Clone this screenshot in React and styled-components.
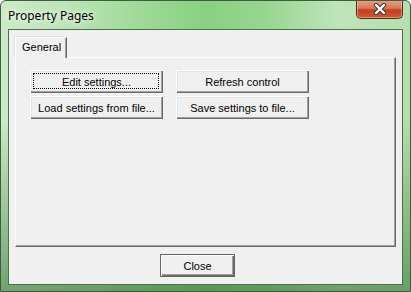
import styled, { createGlobalStyle } from 'styled-components';

const Global = createGlobalStyle`
  html, body {
    margin: 0;
    padding: 0;
    background: #ffffff;
  }
`;

const Window = styled.div`
  box-sizing: border-box;
  width: 411px;
  height: 292px;
  display: flex;
  flex-direction: column;
  padding: 0 7px 6px 7px;
  border: 1px solid #3e5c3e;
  border-radius: 6px 6px 0 0;
  background:
    linear-gradient(180deg, rgba(70,130,70,0) 0%, rgba(70,130,70,0) 40%, rgba(55,115,55,0.6) 100%),
    linear-gradient(90deg, #cdeac8 0%, #bde4b7 15%, #9cd996 35%, #88d180 50%, #97d690 65%, #bfe4ba 82%, #b4dfae 100%);
  overflow: hidden;
`;

const TitleBar = styled.div`
  height: 28px;
  flex: none;
  display: flex;
  justify-content: space-between;
  align-items: flex-start;
`;

const Title = styled.span`
  margin-top: 6px;
  font-family: "Noto Sans", "Open Sans", sans-serif;
  font-size: 12px;
  color: #000;
  text-shadow: 0 0 8px rgba(255,255,255,0.9), 0 0 4px rgba(255,255,255,0.9);
`;

const CloseButton = styled.div`
  width: 45px;
  height: 18px;
  margin-top: -1px;
  display: flex;
  align-items: center;
  justify-content: center;
  border: 1px solid #5a2a20;
  border-top: none;
  border-radius: 0 0 5px 5px;
  background: linear-gradient(180deg, #e8a08a 0%, #d9785c 45%, #c2401e 55%, #cf5a34 100%);
  box-shadow: inset 0 0 0 1px rgba(255,255,255,0.35);
`;

const Client = styled.div`
  flex: 1;
  display: flex;
  flex-direction: column;
  border: 1px solid #4f6e4f;
  background: #f0f0f0;
  padding: 7px 6px 0 6px;
  font-family: "Liberation Sans", Arial, sans-serif;
  font-size: 11px;
  color: #000;
`;

const TabStrip = styled.div`
  display: flex;
  height: 20px;
`;

const Tab = styled.div`
  box-sizing: border-box;
  width: 52px;
  height: 21px;
  padding: 3px 0 0 6px;
  background: #f0f0f0;
  border-top: 1px solid #ffffff;
  border-left: 1px solid #ffffff;
  border-right: 1px solid #696969;
  box-shadow: inset -1px 0 0 #a0a0a0, -1px -1px 0 #e3e3e3;
  position: relative;
  z-index: 1;
`;

const Panel = styled.div`
  box-sizing: border-box;
  height: 190px;
  border-top: 1px solid #ffffff;
  border-left: 1px solid #ffffff;
  border-right: 1px solid #696969;
  border-bottom: 1px solid #696969;
  box-shadow: inset -1px -1px 0 #a0a0a0;
  padding: 12px 0 0 14px;
`;

const ButtonGrid = styled.div`
  display: grid;
  grid-template-columns: 133px 133px;
  column-gap: 13px;
  row-gap: 3px;
`;

const Button = styled.button`
  box-sizing: border-box;
  width: ${p => p.$w || 133}px;
  height: 23px;
  padding: 0;
  font-family: "Liberation Sans", Arial, sans-serif;
  font-size: 11px;
  color: #000;
  background: #f0f0f0;
  border: none;
  box-shadow: ${p => p.$default
    ? 'inset 0 0 0 1px #646464, inset 1px 1px 0 1px #ffffff, inset -1px -1px 0 1px #696969, inset -2px -2px 0 1px #a0a0a0'
    : 'inset 1px 1px 0 #ffffff, inset -1px -1px 0 #696969, inset -2px -2px 0 #a0a0a0, inset 2px 2px 0 #e3e3e3'};
  position: relative;
  display: flex;
  align-items: center;
  justify-content: center;
`;

const Focus = styled.span`
  position: absolute;
  inset: 3px 4px 4px 3px;
  border: 1px dotted #000;
`;

const Footer = styled.div`
  display: flex;
  justify-content: flex-start;
  padding-top: 7px;
  padding-left: 145px;
`;

const CloseGlyph = () => (
  <svg width="14" height="12" viewBox="0 0 14 12">
    <path d="M3 2 L11 10 M11 2 L3 10"
      stroke="#3a3a3a" strokeWidth="4.4" strokeLinecap="round" fill="none" />
    <path d="M3 2 L11 10 M11 2 L3 10" stroke="#ffffff" strokeWidth="2.4" strokeLinecap="round" fill="none" />
  </svg>
);

export default function App() {
  return (
    <>
      <Global />
      <Window>
        <TitleBar>
          <Title>Property Pages</Title>
          <CloseButton><CloseGlyph /></CloseButton>
        </TitleBar>
        <Client>
          <TabStrip>
            <Tab>General</Tab>
          </TabStrip>
          <Panel>
            <ButtonGrid>
              <Button>Edit settings...<Focus /></Button>
              <Button>Refresh control</Button>
              <Button>Load settings from file...</Button>
              <Button>Save settings to file...</Button>
            </ButtonGrid>
          </Panel>
          <Footer>
            <Button $w={75} $default>Close</Button>
          </Footer>
        </Client>
      </Window>
    </>
  );
}
